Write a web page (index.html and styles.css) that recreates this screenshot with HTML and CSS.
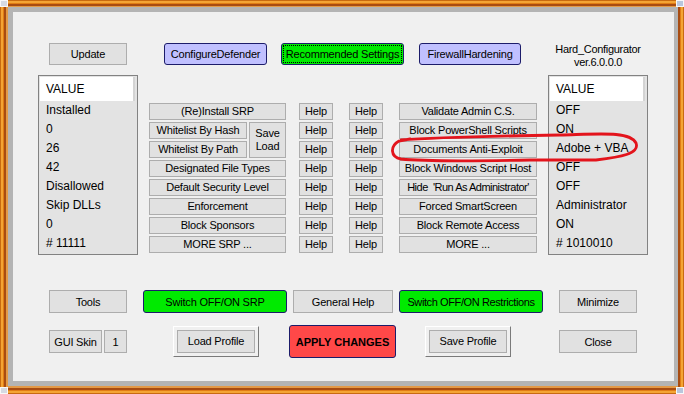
FILE: index.html
```html
<!DOCTYPE html>
<html lang="en">
<head>
    <meta charset="UTF-8">
    <title>Hard_Configurator</title>
    <link rel="stylesheet" href="styles.css">
</head>
<body>
<div class="frame">
  <span class="grip grip-tl"></span>
  <span class="grip grip-tr"></span>
  <span class="grip grip-bl"></span>
  <span class="grip grip-br"></span>
  <div class="bezel">
    <div class="client">

      <!-- top buttons -->
      <div class="row-top">
        <button class="btn w-update">Update</button>
        <button class="btn btn-blue w-defender">ConfigureDefender</button>
        <button class="btn btn-green btn-focus w-recommended"><span>Recommended Settings</span></button>
        <button class="btn btn-blue w-firewall">FirewallHardening</button>
        <div class="app-title">Hard_Configurator<br>ver.6.0.0.0</div>
      </div>

      <!-- lists + option grid -->
      <div class="row-main">
        <div class="list list-left">
          <div class="list-head">VALUE</div>
          <div class="list-item">Installed</div>
          <div class="list-item">0</div>
          <div class="list-item">26</div>
          <div class="list-item">42</div>
          <div class="list-item">Disallowed</div>
          <div class="list-item">Skip DLLs</div>
          <div class="list-item">0</div>
          <div class="list-item"># 11111</div>
        </div>

        <div class="options">
          <button class="gbtn c-a">(Re)Install SRP</button>
          <button class="gbtn c-h1">Help</button>
          <button class="gbtn c-h2">Help</button>
          <button class="gbtn c-b">Validate Admin C.S.</button>

          <button class="gbtn c-hash">Whitelist By Hash</button>
          <button class="gbtn c-save">Save<br>Load</button>
          <button class="gbtn c-h1">Help</button>
          <button class="gbtn c-h2">Help</button>
          <button class="gbtn c-b">Block PowerShell Scripts</button>

          <button class="gbtn c-hash">Whitelist By Path</button>
          <button class="gbtn c-h1">Help</button>
          <button class="gbtn c-h2">Help</button>
          <button class="gbtn c-b">Documents Anti-Exploit</button>

          <button class="gbtn c-a">Designated File Types</button>
          <button class="gbtn c-h1">Help</button>
          <button class="gbtn c-h2">Help</button>
          <button class="gbtn c-b">Block Windows Script Host</button>

          <button class="gbtn c-a">Default Security Level</button>
          <button class="gbtn c-h1">Help</button>
          <button class="gbtn c-h2">Help</button>
          <button class="gbtn c-b tight">Hide &nbsp;'Run As Administrator'</button>

          <button class="gbtn c-a">Enforcement</button>
          <button class="gbtn c-h1">Help</button>
          <button class="gbtn c-h2">Help</button>
          <button class="gbtn c-b">Forced SmartScreen</button>

          <button class="gbtn c-a">Block Sponsors</button>
          <button class="gbtn c-h1">Help</button>
          <button class="gbtn c-h2">Help</button>
          <button class="gbtn c-b">Block Remote Access</button>

          <button class="gbtn c-a">MORE SRP ...</button>
          <button class="gbtn c-h1">Help</button>
          <button class="gbtn c-h2">Help</button>
          <button class="gbtn c-b">MORE ...</button>
        </div>

        <div class="list list-right">
          <div class="list-head">VALUE</div>
          <div class="list-item">OFF</div>
          <div class="list-item">ON</div>
          <div class="list-item">Adobe + VBA</div>
          <div class="list-item">OFF</div>
          <div class="list-item">OFF</div>
          <div class="list-item">Administrator</div>
          <div class="list-item">ON</div>
          <div class="list-item"># 1010010</div>
        </div>
      </div>

      <!-- bottom buttons -->
      <div class="row-a">
        <button class="btn w-tools">Tools</button>
        <button class="btn btn-green w-srp">Switch OFF/ON SRP</button>
        <button class="btn w-general">General Help</button>
        <button class="btn btn-green w-restr">Switch OFF/ON Restrictions</button>
        <button class="btn w-minimize">Minimize</button>
      </div>

      <div class="row-b">
        <button class="btn w-skin">GUI Skin</button>
        <button class="btn w-one">1</button>
        <button class="btn-raised w-load"><span class="raised-face">Load Profile</span></button>
        <button class="btn btn-red w-apply">APPLY CHANGES</button>
        <button class="btn-raised w-saveprof"><span class="raised-face">Save Profile</span></button>
        <button class="btn w-close">Close</button>
      </div>

      <!-- hand drawn marker -->
      <svg class="marker" width="661" height="369" viewBox="13 12 661 369">
        <path d="M 401 140 C 440 137, 500 136, 560 135 C 600 134, 630 131, 636 143 C 640 154, 620 157, 596 160 L 530 160 C 480 161, 420 161, 401 159 C 390 157, 390 146, 399 141 L 410 139"
              fill="none" stroke="#e3141c" stroke-width="2.8" stroke-linecap="round"/>
      </svg>
    </div>
  </div>
</div>
</body>
</html>
```

FILE: styles.css
```css
body {
    margin: 0;
    font-family: "Liberation Sans", Arial, sans-serif;
    font-size: 11px;
    color: #000;
}

/* window frame */
.frame {
    position: relative;
    width: 684px;
    height: 394px;
    box-sizing: border-box;
    padding: 7px 6px 8px 8px;
    background: #e88c1e;
    box-shadow: inset 0 0 0 1px #c86a10,
                inset 0 0 0 3px #f4a434,
                inset 0 0 0 4px #e07c14,
                inset 0 0 0 6px #a84c12,
                inset 0 0 0 8px #e39a48;
}
.grip {
    position: absolute;
    width: 8px;
    height: 7px;
    background: #d6dae2;
    border: 1px solid #f8f8f8;
    box-sizing: border-box;
}
.grip-tl { left: 0; top: 0; }
.grip-tr { right: 0; top: 0; background: #b9c6dc; }
.grip-bl { left: 0; bottom: 0; }
.grip-br { right: 0; bottom: 0; background: #b9c6dc; }
.bezel {
    height: 100%;
    box-sizing: border-box;
    border-style: solid;
    border-color: #b4b4b4;
    border-width: 5px 4px 5px 5px;
}
.client {
    position: relative;
    height: 100%;
    background: #f0f0f0;
    padding-top: 31px;
    box-sizing: border-box;
}

/* buttons */
.btn {
    box-sizing: border-box;
    height: 22px;
    margin: 0;
    padding: 0;
    font: inherit;
    letter-spacing: -0.2px;
    color: #000;
    background: #e1e1e1;
    border: 1px solid #adadad;
    text-align: center;
    white-space: nowrap;
}
.btn-blue {
    background: #c0c0ff;
    border-color: #1c1c6a;
    border-radius: 3px;
}
.btn-green {
    background: #00ea00;
    border-color: #1c1c6a;
    border-radius: 3px;
}
.btn-focus span {
    display: block;
    margin: 2px;
    height: 16px;
    line-height: 16px;
    outline: 1px dotted #000;
}
.btn-red {
    background: #ff4848;
    border-color: #1c1c6a;
    border-radius: 3px;
    font-weight: bold;
    letter-spacing: 0;
}
.btn-raised {
    box-sizing: border-box;
    height: 31px;
    margin: 0;
    padding: 3px;
    font: inherit;
    letter-spacing: -0.2px;
    background: #f0f0f0;
    border: 1px solid;
    border-color: #ffffff #7a7a7a #7a7a7a #ffffff;
}
.raised-face {
    display: block;
    height: 23px;
    box-sizing: border-box;
    line-height: 21px;
    border: 1px solid #adadad;
    background: #e1e1e1;
    color: #000;
}

/* top row */
.row-top {
    display: flex;
    align-items: flex-start;
    height: 22px;
}
.w-update { width: 78px; margin-left: 36px; }
.w-defender { width: 103px; margin-left: 37px; }
.w-recommended { width: 123px; margin-left: 14px; }
.w-firewall { width: 102px; margin-left: 15px; }
.app-title {
    width: 100px;
    margin-left: 27px;
    text-align: center;
    line-height: 13px;
    letter-spacing: -0.3px;
}

/* lists */
.row-main {
    display: flex;
    align-items: flex-start;
    margin-top: 10px;
}
.list {
    width: 100px;
    height: 180px;
    box-sizing: border-box;
    border: 1px solid #828282;
    background: #e3e3e3;
    padding: 1px;
    font-size: 12px;
}
.list-left { margin-left: 25px; }
.list-right { margin-left: 11px; }
.list-head {
    width: 95px;
    height: 24px;
    line-height: 24px;
    padding-left: 6px;
    box-sizing: border-box;
    background: #fff;
    border-right: 2px solid #d4d4d4;
}
.list-item {
    height: 19px;
    line-height: 19px;
    padding-left: 6px;
}

/* option grid */
.options {
    display: grid;
    grid-template-columns: 98px 2px 37px 13px 34px 16px 34px 16px 138px;
    grid-template-rows: repeat(8, 17px);
    row-gap: 2px;
    margin-left: 11px;
    margin-top: 28px;
}
.gbtn {
    box-sizing: border-box;
    height: 17px;
    margin: 0;
    padding: 0;
    font: inherit;
    letter-spacing: -0.2px;
    line-height: 15px;
    color: #000;
    background: #e1e1e1;
    border: 1px solid #adadad;
    white-space: nowrap;
    overflow: hidden;
}
.c-a { grid-column: 1 / 4; }
.c-hash { grid-column: 1; }
.c-save {
    grid-column: 3;
    grid-row: 2 / 4;
    height: 36px;
    line-height: 13px;
}
.c-h1 { grid-column: 5; }
.c-h2 { grid-column: 7; }
.c-b { grid-column: 9; }
.tight { letter-spacing: -0.5px; }

/* bottom rows */
.row-a {
    display: flex;
    margin-top: 35px;
}
.row-a .btn { height: 23px; }
.w-tools { width: 78px; margin-left: 36px; }
.w-srp { width: 144px; margin-left: 16px; }
.w-general { width: 100px; margin-left: 6px; }
.w-restr { width: 144px; margin-left: 6px; letter-spacing: -0.4px; }
.w-minimize { width: 78px; margin-left: 16px; }

.row-b {
    display: flex;
    align-items: center;
    height: 33px;
    margin-top: 12px;
}
.row-b .btn { height: 23px; }
.w-skin { width: 53px; margin-left: 36px; }
.w-one { width: 23px; margin-left: 2px; }
.w-load { width: 86px; margin-left: 46px; }
.row-b .w-apply { width: 107px; height: 33px; margin-left: 30px; }
.w-saveprof { width: 86px; margin-left: 29px; }
.w-close { width: 78px; margin-left: 48px; }

.marker {
    position: absolute;
    left: 0;
    top: 0;
    pointer-events: none;
}
```
